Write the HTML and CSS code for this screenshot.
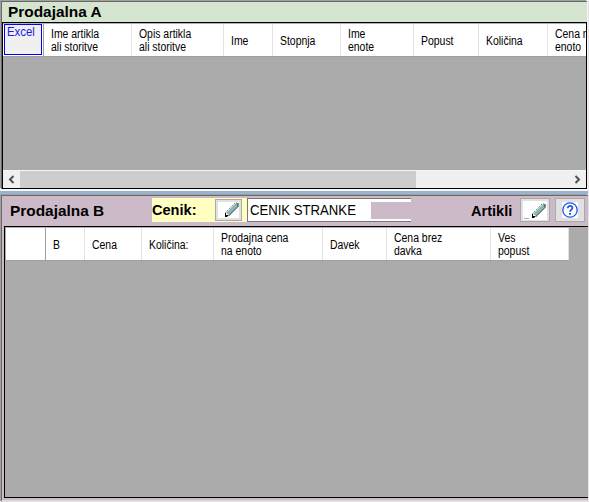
FILE: index.html
```html
<!DOCTYPE html>
<html lang="sl">
<head>
<meta charset="utf-8">
<title>Prodajalna</title>
<link rel="stylesheet" href="styles.css">
</head>
<body>
<main class="window">
  <section class="panel panel-a">
    <h2 class="title title-a"><span>Prodajalna A</span></h2>
    <div class="grid grid-a">
      <div class="head head-a">
        <div class="corner"><button class="excel"><span>Excel</span></button></div>
        <div class="cell"><span>Ime artikla<br>ali storitve</span></div>
        <div class="cell"><span>Opis artikla<br>ali storitve</span></div>
        <div class="cell"><span>Ime</span></div>
        <div class="cell"><span>Stopnja</span></div>
        <div class="cell"><span>Ime<br>enote</span></div>
        <div class="cell"><span>Popust</span></div>
        <div class="cell"><span>Količina</span></div>
        <div class="cell last"><span>Cena na<br>enoto</span></div>
      </div>
      <div class="space"></div>
      <div class="scroll">
        <svg class="arrow" viewBox="0 0 17 17"><path d="M10.500 5 7 8.500l3.500 3.500"/></svg>
        <div class="thumb"></div>
        <svg class="arrow arrow-right" viewBox="0 0 17 17"><path d="M6.500 5 10 8.500 6.500 12"/></svg>
      </div>
    </div>
  </section>
  <div class="splitter"></div>
  <section class="panel panel-b">
    <div class="toolbar">
      <h2 class="title title-b"><span>Prodajalna B</span></h2>
      <div class="pricing">
        <span class="label">Cenik:</span>
        <button class="tool pick" aria-label="Uredi cenik"><svg width="21" height="16" viewBox="0 0 21 16"><path fill="#fff" d="M0 0h21v16H0z"/><path class="body" d="M8 11 17.500 1.500h2.500v2.500L11 13z"/><path class="dots" d="M7.500 10.500 17 1h3"/><path class="edge" d="m10.500 14 9.500-9.500V1"/><path class="tip" d="M7 11h1v2h2v1l-1 1H7z"/></svg></button>
      </div>
      <div class="field"><span>CENIK STRANKE</span><i></i></div>
      <span class="label items">Artikli</span>
      <button class="tool edit" aria-label="Uredi artikle"><svg width="24" height="19" viewBox="0 0 24 19"><path fill="#fff" d="M0 0h24v19H0z"/><path class="body" d="M10 13 19.500 3.500h2.500v2.500L13 15z"/><path class="dots" d="M9.500 12.500 19 3h3"/><path class="edge" d="m12.500 16 9.500-9.500V3"/><path class="tip" d="M9 13h1v2h2v1l-1 1H9z"/><path d="M1 17.500h5" stroke="#8fb5b5"/></svg></button>
      <button class="tool help" aria-label="Pomoč"><svg width="16" height="16" viewBox="0 0 16 16"><path fill="#fff" d="M0 0h16v16H0z"/><circle cx="8" cy="8" r="7.200" fill="none" stroke="#1b55e8" stroke-width="1.300"/><path d="M5.700 6.300c0-3.200 4.700-3 4.700-.2C10.400 7.800 8 7.600 8 9.700" fill="none" stroke="#1b55e8" stroke-width="1.700"/><path fill="#1b55e8" d="M7 11h2v1.800H7z"/></svg></button>
    </div>
    <div class="grid grid-b">
      <div class="head head-b">
        <div class="corner"></div>
        <div class="cell"><span>B</span></div>
        <div class="cell"><span>Cena</span></div>
        <div class="cell"><span>Količina:</span></div>
        <div class="cell"><span>Prodajna cena<br>na enoto</span></div>
        <div class="cell"><span>Davek</span></div>
        <div class="cell"><span>Cena brez<br>davka</span></div>
        <div class="cell"><span>Ves<br>popust</span></div>
      </div>
    </div>
  </section>
</main>
</body>
</html>
```
FILE: styles.css
```css
* { box-sizing: border-box; }
body {
  margin: 0;
  width: 589px;
  height: 502px;
  overflow: hidden;
  background: #e8e4e8;
  font-family: "Liberation Sans", Arial, sans-serif;
  color: #000;
}
button { margin: 0; padding: 0; font: inherit; }
.window { width: 588px; height: 502px; background: #f4f2f4; }
.panel { border: solid #696969; border-width: 1px 0 0 1px; box-shadow: -1px -1px #a0a0a0; }
.panel-a { margin-left: 1px; height: 188px; position: relative; top: 1px; width: 586px; }
.title { margin: 0; font-size: 14px; font-weight: 700; white-space: nowrap; }
.title span { display: inline-block; transform: scaleX(1.1); transform-origin: 0 0; }
.title-a { height: 20px; padding-left: 6px; line-height: 20px; background: #d6e5d0; }
.grid { background: #ababab; border: 1px solid #000; }
.grid-a { height: 167px; display: flex; flex-direction: column; }
.head { display: grid; border-bottom: 1px solid #a0a0a0; background: #fff; }
.head-a {
  height: 34px;
  border-top: 1px solid #b5b0b5;
  grid-template-columns: 41px 88px 92px 49px 68px 73px 65px 69px 38px;
  overflow: hidden;
}
.corner { border-right: 1px solid #a0a0a0; }
.excel {
  display: block;
  width: 38px;
  height: 31px;
  margin-left: 1px;
  padding-left: 2px;
  border: 1px solid #00f;
  background: #f0f0f0;
  color: #1818e8;
  font-size: 12px;
  line-height: 14px;
  text-align: left;
}
.excel span { display: block; height: 29px; transform: scaleX(.95); transform-origin: 0 0; }
.cell {
  display: flex;
  align-items: center;
  padding: 2px 0 0 7px;
  border-right: 1px solid #e2e2e2;
  font-size: 12px;
  line-height: 13px;
  white-space: nowrap;
  overflow: hidden;
}
.cell span { transform: scaleX(.87); transform-origin: 0 0; }
.last { border-right: 0; }
.space { flex: 1; border-bottom: 1px solid #f5f5f5; }
.scroll { height: 17px; display: flex; background: #f0f0f0; }
.arrow { width: 17px; height: 17px; fill: none; stroke: #505050; stroke-width: 2; }
.thumb { width: 396px; background: #cdcdcd; }
.arrow-right { margin-left: auto; }
.splitter { height: 5px; margin-top: 1px; border-top: 2px solid #f9f7f9; background: #99b4d1; }
.panel-b { margin: 1px 0 0 1px; height: 307px; background: #cdbac8; border-bottom: 2px solid #dedade; }
.toolbar { height: 30px; display: flex; align-items: flex-start; }
.title-b { width: 150px; padding-left: 8px; line-height: 30px; }
.pricing { width: 95px; height: 24px; margin-top: 2px; display: flex; justify-content: space-between; background: #ffffc0; }
.label { font-size: 14px; line-height: 25px; font-weight: 700; transform: scaleX(1.04); transform-origin: 0 0; }
.tool { border: 1px solid #a9a9a9; background: #e1e1e1; display: flex; align-items: center; justify-content: center; }
.tool svg { display: block; }
.pick { width: 27px; height: 22px; margin: 1px 5px 0 0; }
.body { fill: #7fb9b9; }
.dots { fill: none; stroke: #633; stroke-width: .8; stroke-dasharray: 1.2 1.2; }
.edge { fill: none; stroke: #111; stroke-width: .9; }
.tip { fill: #000; }
.field {
  width: 164px;
  height: 24px;
  margin-top: 2px;
  display: flex;
  align-items: center;
  justify-content: space-between;
  border: solid #777;
  border-width: 1px 0 1px 1px;
  background: #fff;
  font-size: 14px;
  white-space: nowrap;
}
.field span { padding-left: 2px; line-height: 20px; margin-bottom: 1px; transform: scaleX(.94); transform-origin: 0 0; }
.field i { width: 40px; height: 17px; background: #cdbac8; }
.items { width: 49px; margin: 3px 0 0 60px; }
.edit { width: 30px; height: 24px; margin-top: 2px; }
.help { width: 30px; height: 24px; margin: 2px 0 0 5px; }
.grid-b { width: 584px; height: 272px; margin-left: 2px; border-right: 0; }
.head-b {
  width: 564px;
  height: 34px;
  border-top: 1px solid #b5b0b5;
  border-left: 1px solid #ababab;
  grid-template-columns: 40px 39px 57px 72px 109px 64px 104px 78px;
}
```
